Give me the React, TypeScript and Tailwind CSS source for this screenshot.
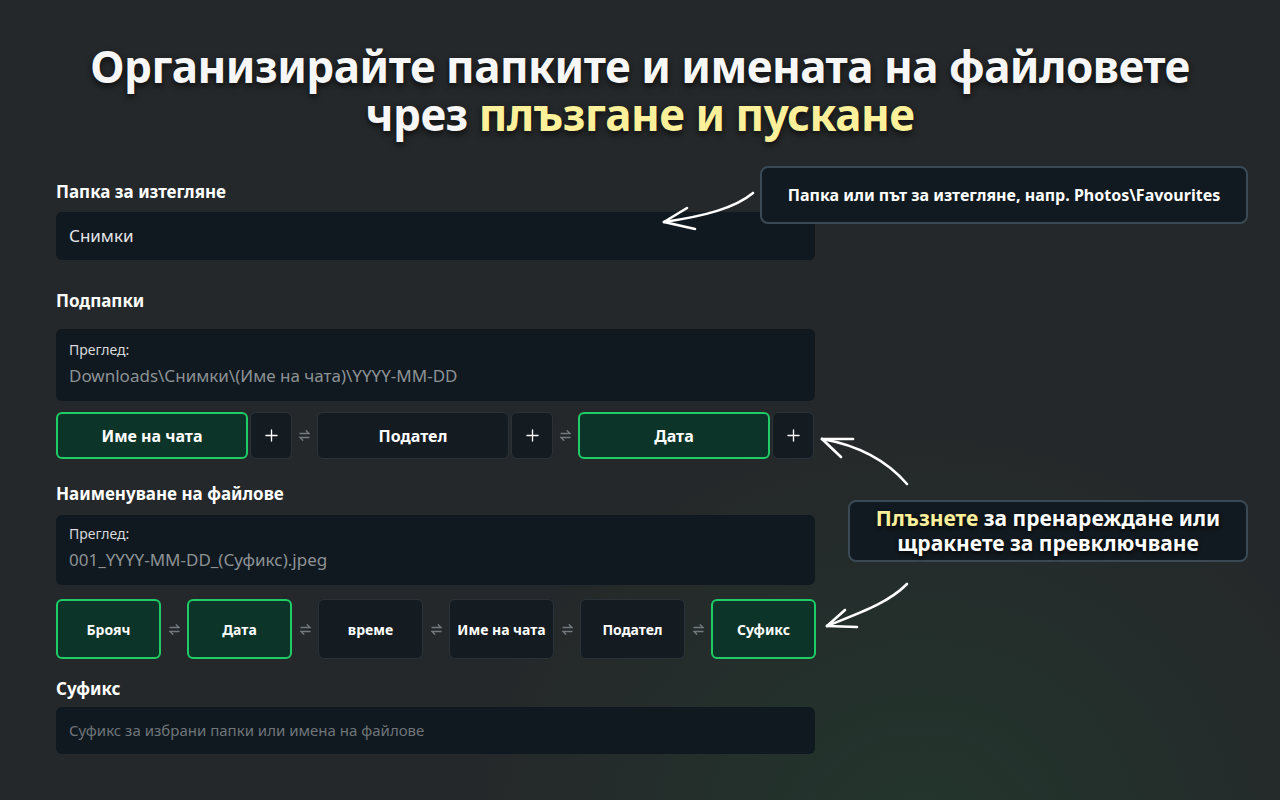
import { Plus } from 'lucide-react'

const Swap = () => (
    <svg width="11" height="15" viewBox="0 0 11 15" className="text-[#727a7f]" fill="none" stroke="currentColor" strokeWidth="1.3" strokeLinecap="round">
        <path d="M1 5.5 H10 L7.2 2.7" />
        <path d="M10 9.5 H1 L3.8 12.3" />
    </svg>
)

type Chip = { label: string; on: boolean }

const folderChips: Chip[] = [
    { label: 'Име на чата', on: true },
    { label: 'Подател', on: false },
    { label: 'Дата', on: true },
]

const fileChips: Chip[] = [
    { label: 'Брояч', on: true },
    { label: 'Дата', on: true },
    { label: 'време', on: false },
    { label: 'Име на чата', on: false },
    { label: 'Подател', on: false },
    { label: 'Суфикс', on: true },
]

const chipClass = (on: boolean) =>
    on
        ? 'bg-[#0d3429] border-2 border-[#20cc66] text-white'
        : 'bg-[#141b21] border border-[#2b3339] text-white'

export default function App() {
    return (
        <div
            className="relative w-[1280px] h-[800px] overflow-hidden bg-[#25282a] bg-[radial-gradient(ellipse_at_72%_105%,rgba(30,80,50,0.35),transparent_35%)] text-white"
            style={{ fontFamily: '"Noto Sans", "Open Sans", sans-serif' }}
        >
            {/* title */}
            <h1 className="pt-[42px] text-center font-bold text-[44px] leading-[48px] tracking-[-0.5px] text-[#f7f7f7] [text-shadow:0_3px_6px_rgba(0,0,0,0.7)]">
                <div>Организирайте папките и имената на файловете</div>
                <div>
                    чрез <span className="text-[#fcf19a]">плъзгане и пускане</span>
                </div>
            </h1>

            <div className="ml-[56px] w-[759px] mt-[44px]">
                <div className="text-[17px] leading-[20px] font-bold">Папка за изтегляне</div>
                <div className="mt-[10px] h-[48px] rounded-md bg-[#101920] flex items-center px-[13px] text-[17px] text-[#e4e6e7]">
                    Снимки
                </div>

                <div className="mt-[31px] text-[17px] leading-[20px] font-bold">Подпапки</div>
                <div className="mt-[18px] h-[72px] rounded-md bg-[#101920] px-[13px] pt-[11px]">
                    <div className="text-[14px] leading-[20px] text-[#d8dadb]">Преглед:</div>
                    <div className="mt-[4px] text-[17px] leading-[24px] text-[#8d9295]">Downloads\Снимки\(Име на чата)\YYYY-MM-DD</div>
                </div>

                <div className="mt-[11px] flex items-center h-[47px]">
                    {folderChips.map((c, i) => (
                        <div key={c.label} className="flex items-center h-full">
                            {i > 0 && (
                                <div className="w-[25px] flex justify-center"><Swap /></div>
                            )}
                            <div className={`w-[192px] h-full rounded-md flex items-center justify-center text-[16px] font-bold ${chipClass(c.on)}`}>
                                {c.label}
                            </div>
                            <div className="ml-[2px] w-[42px] h-full rounded-md bg-[#141b21] border border-[#2b3339] flex items-center justify-center">
                                <Plus className="w-[19px] h-[19px]" strokeWidth={1.7} />
                            </div>
                        </div>
                    ))}
                </div>

                <div className="mt-[25px] text-[17px] leading-[20px] font-bold">Наименуване на файлове</div>
                <div className="mt-[11px] h-[70px] rounded-md bg-[#101920] px-[13px] pt-[9px]">
                    <div className="text-[14px] leading-[20px] text-[#d8dadb]">Преглед:</div>
                    <div className="mt-[4px] text-[17px] leading-[24px] text-[#8d9295]">001_YYYY-MM-DD_(Суфикс).jpeg</div>
                </div>

                <div className="mt-[14px] flex items-center h-[60px]">
                    {fileChips.map((c, i) => (
                        <div key={c.label + i} className="flex items-center h-full">
                            {i > 0 && (
                                <div className="w-[26px] flex justify-center"><Swap /></div>
                            )}
                            <div className={`w-[105px] h-full rounded-md flex items-center justify-center text-[14px] font-bold ${chipClass(c.on)}`}>
                                {c.label}
                            </div>
                        </div>
                    ))}
                </div>

                <div className="mt-[20px] text-[17px] leading-[20px] font-bold">Суфикс</div>
                <div className="mt-[8px] h-[47px] rounded-md bg-[#101920] flex items-center px-[13px] text-[15px] text-[#6f7579]">
                    Суфикс за избрани папки или имена на файлове
                </div>
            </div>

            {/* callouts */}
            <div className="absolute left-[760px] top-[166px] w-[488px] h-[58px] rounded-lg bg-[#111a20] border-2 border-[#3a4953] flex items-center justify-center text-[16px] font-bold">
                Папка или път за изтегляне, напр. Photos\Favourites
            </div>

            <div className="absolute left-[848px] top-[500px] w-[400px] h-[62px] rounded-lg bg-[#111a20] border-2 border-[#3a4953] flex items-center justify-center text-center text-[21px] leading-[25px] font-bold [text-shadow:0_2px_4px_rgba(0,0,0,0.8)]">
                <div>
                    <div>
                        <span className="text-[#fcf19a]">Плъзнете</span> за пренареждане или
                    </div>
                    <div>щракнете за превключване</div>
                </div>
            </div>

            {/* hand-drawn arrows */}
            <svg className="absolute inset-0 pointer-events-none" width="1280" height="800" fill="none" stroke="#ffffff" strokeWidth="2.6" strokeLinecap="round" strokeLinejoin="round">
                <path d="M753 193 C735 208 705 216 664 222" />
                <path d="M664 222 L687 208" />
                <path d="M664 222 L695 229" />

                <path d="M907 484 C888 462 862 446 822 439" />
                <path d="M822 439 L853 439" />
                <path d="M822 439 L841 457" />

                <path d="M907 584 C888 603 862 612 827 626" />
                <path d="M827 626 L845 610" />
                <path d="M827 626 L857 627" />
            </svg>
        </div>
    )
}
